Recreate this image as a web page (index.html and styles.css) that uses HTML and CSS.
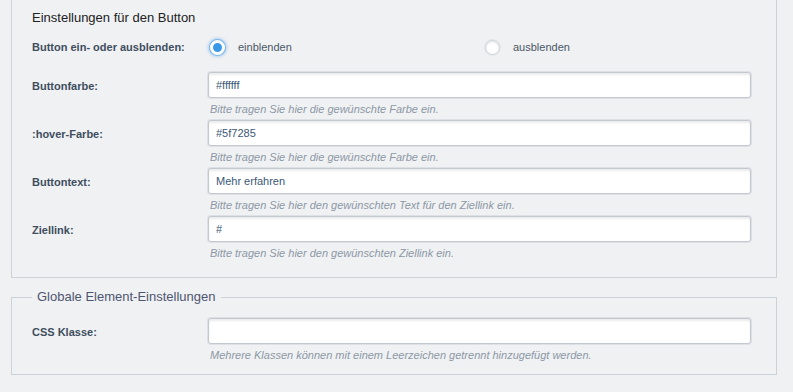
FILE: index.html
```html
<!DOCTYPE html>
<html lang="de">
<head>
    <meta charset="UTF-8">
    <meta name="viewport" content="width=device-width, initial-scale=1.0">
    <title>Button-Einstellungen</title>
    <link rel="stylesheet" href="styles.css">
</head>
<body>
    <form class="settings">
        <fieldset class="settings__group settings__group--open">
            <h3 class="settings__title">Einstellungen für den Button</h3>

            <div class="settings__row settings__row--radio">
                <label class="settings__label">Button ein- oder ausblenden:</label>
                <div class="settings__radios">
                    <label class="radio">
                        <span class="radio__dot radio__dot--checked"></span>
                        einblenden
                    </label>
                    <label class="radio">
                        <span class="radio__dot"></span>
                        ausblenden
                    </label>
                </div>
            </div>

            <div class="settings__row">
                <label class="settings__label">Buttonfarbe:</label>
                <div class="settings__field">
                    <input class="settings__input" type="text" value="#ffffff">
                    <div class="settings__help">Bitte tragen Sie hier die gewünschte Farbe ein.</div>
                </div>
            </div>

            <div class="settings__row">
                <label class="settings__label">:hover-Farbe:</label>
                <div class="settings__field">
                    <input class="settings__input" type="text" value="#5f7285">
                    <div class="settings__help">Bitte tragen Sie hier die gewünschte Farbe ein.</div>
                </div>
            </div>

            <div class="settings__row">
                <label class="settings__label">Buttontext:</label>
                <div class="settings__field">
                    <input class="settings__input" type="text" value="Mehr erfahren">
                    <div class="settings__help">Bitte tragen Sie hier den gewünschten Text für den Ziellink ein.</div>
                </div>
            </div>

            <div class="settings__row">
                <label class="settings__label">Ziellink:</label>
                <div class="settings__field">
                    <input class="settings__input" type="text" value="#">
                    <div class="settings__help">Bitte tragen Sie hier den gewünschten Ziellink ein.</div>
                </div>
            </div>
        </fieldset>

        <fieldset class="settings__group">
            <legend class="settings__legend">Globale Element-Einstellungen</legend>

            <div class="settings__row">
                <label class="settings__label">CSS Klasse:</label>
                <div class="settings__field">
                    <input class="settings__input" type="text" value="">
                    <div class="settings__help">Mehrere Klassen können mit einem Leerzeichen getrennt hinzugefügt werden.</div>
                </div>
            </div>
        </fieldset>
    </form>
</body>
</html>
```

FILE: styles.css
```css
body {
    margin: 0;
    background: #F0F1F3;

    font-family: "Liberation Sans", Arial, sans-serif;
    color: #3E4D5C;
}

.settings {
    margin: 0 16px 0 11px;
}

.settings__group {
    margin: 0;
    padding: 0 25px 8px 20px;

    border: 1px solid #CDD2D9;
}

.settings__group--open {
    border-top: 0;
    padding-top: 10px;
    padding-bottom: 13px;
    margin-bottom: 11px;
}

.settings__title {
    margin: 0 0 13px;

    font-size: 13px;
    font-weight: normal;
    line-height: 16px;

    color: #222222;
}

.settings__legend {
    margin-left: 0;
    padding: 0 5px;

    font-size: 13px;
    line-height: 16px;

    color: #4E5570;
}

.settings__row {
    display: grid;
    grid-template-columns: 176px 1fr;
    align-items: start;

    margin-bottom: 4px;
}

.settings__group .settings__legend + .settings__row {
    margin-top: 13px;
}

.settings__label {
    padding-top: 8px;

    font-size: 11px;
    font-weight: bold;
    line-height: 13px;

    color: #3E4E5E;
}

.settings__row--radio {
    margin-bottom: 17px;
}

.settings__row--radio .settings__label {
    padding-top: 2px;
}

.settings__radios {
    display: grid;
    grid-template-columns: 275px 1fr;
}

.radio {
    display: flex;
    align-items: center;
    gap: 13px;

    padding-left: 2px;

    font-size: 11px;
    line-height: 16px;

    color: #4A5866;
}

.radio__dot {
    width: 15px;
    height: 15px;

    box-sizing: border-box;

    border-radius: 50%;
    border: 1px solid #D0D4D9;
    background: #FFFFFF;
    box-shadow: 0 0 0 1px #E4E7EA, inset 0 1px 2px rgba(0, 0, 0, 0.12);
}

.radio__dot--checked {
    border: 3px solid #FFFFFF;
    background: #3A98E8;
    box-shadow: 0 0 0 1px #7DB6EC, 0 0 3px 2px rgba(120, 180, 240, 0.55);
}

.settings__field {
    display: flex;
    flex-direction: column;
    gap: 4px;
}

.settings__input {
    height: 26px;
    margin: 0;
    padding: 0 7px;

    box-sizing: border-box;

    border: 1px solid #C3C9D0;
    border-radius: 3px;
    background: #FFFFFF;
    box-shadow: 0 0 0 1px #DDE1E6, inset 0 2px 2px rgba(0, 0, 0, 0.08);
    outline: none;

    font-family: "Liberation Sans", Arial, sans-serif;
    font-size: 11px;

    color: #3B5875;
}

.settings__help {
    padding-left: 2px;

    font-size: 11px;
    font-style: italic;
    line-height: 14px;

    color: #8C98A6;
}
```
